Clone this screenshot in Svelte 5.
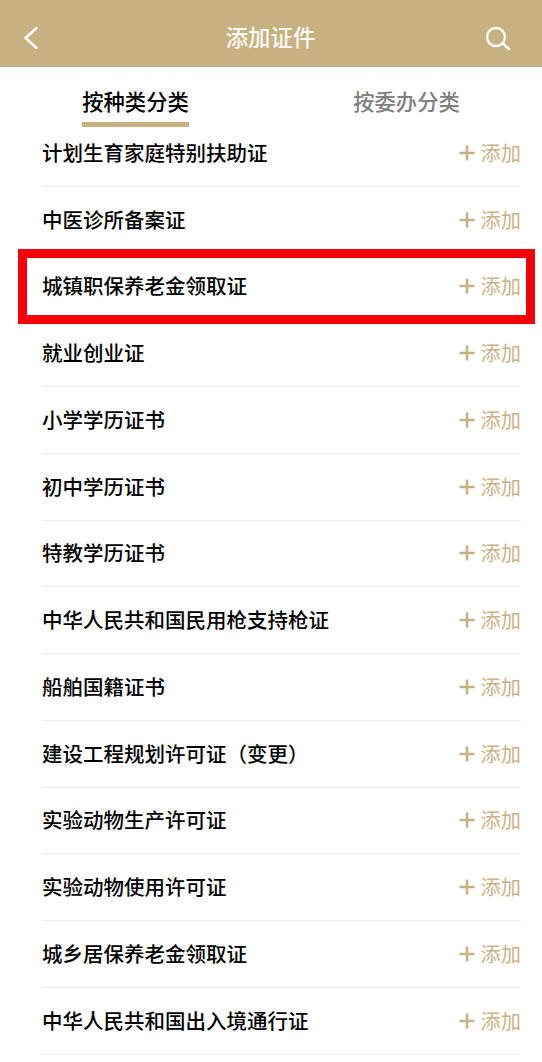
<script>
  const items = ['计划生育家庭特别扶助证','中医诊所备案证','城镇职保养老金领取证','就业创业证','小学学历证书','初中学历证书','特教学历证书','中华人民共和国民用枪支持枪证','船舶国籍证书','建设工程规划许可证（变更）','实验动物生产许可证','实验动物使用许可证','城乡居保养老金领取证','中华人民共和国出入境通行证'];
</script>

<div class="page">
  <header class="bar">
    <svg class="back" width="14" height="24" viewBox="0 0 14 24"><path d="M12.5 2 1.5 12l11 10" /></svg>
    <h1>添加证件</h1>
    <svg class="search" width="26" height="26" viewBox="0 0 26 26"><circle cx="11" cy="11" r="9" /><path d="M18 17.5 24 23" /></svg>
  </header>

  <nav class="tabs">
    <div class="tab active">按种类分类</div>
    <div class="tab">按委办分类</div>
  </nav>

  <ul class="list">
    {#each items as name}
      <li class="row">
        <span class="name">{name}</span>
        <span class="add">
          <svg width="16" height="16" viewBox="0 0 16 16"><path d="M8 0.5v15M0.5 8h15" /></svg>
          添加
        </span>
      </li>
    {/each}
  </ul>

  <div class="highlight"></div>
</div>

<style>
  :global(body) { margin: 0; background: #fff; }
  .page {
    position: relative;
    width: 542px;
    height: 1062px;
    overflow: hidden;
    background: #fff;
    font-family: "Noto Sans CJK SC", "Noto Sans", sans-serif;
  }
  .bar {
    height: 67px;
    padding: 9px 25px 0 24px;
    box-sizing: border-box;
    display: grid;
    grid-template-columns: 1fr auto 1fr;
    align-items: center;
    background: #c8b180;
    border-bottom: 1px solid #bcae90;
  }
  .bar h1 {
    margin: 0 0 4px;
    font-size: 22.4px;
    font-weight: 500;
    color: #fdfbf6;
    white-space: nowrap;
  }
  .bar svg { fill: none; stroke: #fdfbf6; stroke-width: 2.5; stroke-linecap: round; stroke-linejoin: round; }
  .search { justify-self: end; margin-right: 6px; margin-top: 2px; }
  .tabs {
    height: 60px;
    display: grid;
    grid-template-columns: 271px 271px;
  }
  .tab {
    justify-self: center;
    width: 107px;
    height: 60px;
    box-sizing: border-box;
    padding-top: 19px;
    text-align: center;
    font-size: 21.3px;
    line-height: 30px;
    font-weight: 500;
    color: #808080;
    white-space: nowrap;
  }
  .tab.active {
    color: #000;
    border-bottom: 5px solid #c8b180;
  }
  .list { list-style: none; margin: 0; padding: 0 21px 0 42px; }
  .row {
    height: 66.75px;
    box-sizing: border-box;
    padding-bottom: 20px;
    display: flex;
    align-items: flex-end;
    justify-content: space-between;
    border-bottom: 1px solid #ececec;
  }
  .row:first-child { height: 59.75px; }
  .name { font-size: 20.5px; line-height: 28px; font-weight: 500; color: #000; }
  .add {
    display: flex;
    align-items: center;
    gap: 6px;
    height: 28px;
    margin-bottom: -1px;
    font-size: 20.2px;
    line-height: 28px;
    color: #c9b285;
  }
  .add svg { fill: none; stroke: #c9b285; stroke-width: 2.6; }
  .highlight {
    position: absolute;
    left: 18px;
    top: 249px;
    width: 517px;
    height: 75px;
    box-sizing: border-box;
    border: 9px solid #f6000a;
  }
</style>
